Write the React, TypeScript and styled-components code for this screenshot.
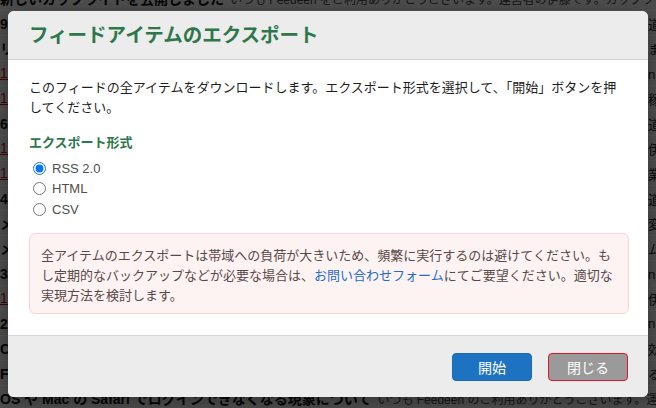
import React from "react";
import styled, { createGlobalStyle, css } from "styled-components";

const Global = createGlobalStyle`
  html, body { margin: 0; padding: 0; }
  body {
    width: 656px;
    height: 408px;
    overflow: hidden;
    background: #ffffff;
    font-family: "Liberation Sans", "Noto Sans CJK JP", sans-serif;
    -webkit-font-smoothing: antialiased;
  }
`;

const Page = styled.div`
  position: relative;
  width: 656px;
  height: 408px;
  overflow: hidden;
  background: #ececec;
`;

const FeedList = styled.ul`
  list-style: none;
  margin: -14px 0 0;
  padding: 0;
`;

const FeedRow = styled.li`
  display: flex;
  align-items: center;
  height: 24px;
  border-bottom: 1px solid #ffffff;
  white-space: nowrap;
  overflow: hidden;
  color: #111;
`;

const RowLead = styled.span<{ $link?: boolean }>`
  flex: none;
  width: 648px;
  overflow: hidden;
  font-size: 14px;
  font-weight: 700;
  ${(p) =>
    p.$link &&
    css`
      color: #c0121b;
      font-weight: 400;
      text-decoration: underline;
    `}
`;

const RowTail = styled.span`
  flex: none;
  font-size: 13px;
  color: #222;
`;

const HeadlineTitle = styled.span`
  font-size: 14px;
  font-weight: 700;
  margin-right: 6px;
`;

const HeadlineExcerpt = styled.span`
  font-size: 12px;
  color: #444;
`;

const Backdrop = styled.div`
  position: absolute;
  inset: 0;
  background: rgba(0, 0, 0, 0.68);
  display: flex;
  justify-content: center;
  align-items: flex-start;
  padding-top: 11px;
`;

const Dialog = styled.div`
  width: 640px;
  background: #ffffff;
  border-radius: 6px;
  overflow: hidden;
  box-shadow: 0 4px 16px rgba(0, 0, 0, 0.3);
`;

const Header = styled.div`
  height: 48px;
  display: flex;
  align-items: center;
  padding: 0 21px;
  background: #ececec;
  border-bottom: 1px solid #d4d4d4;
`;

const Title = styled.h2`
  margin: 0;
  font-size: 19.5px;
  font-weight: 700;
  color: #2e774a;
  line-height: 24px;
`;

const Body = styled.div`
  padding: 18px 19px 21px 21px;
  display: flex;
  flex-direction: column;
`;

const Lead = styled.p`
  margin: 0;
  font-size: 13px;
  line-height: 20px;
  color: #1e1e1e;
`;

const SectionLabel = styled.h3`
  margin: 15px 0 0;
  font-size: 13px;
  line-height: 20px;
  font-weight: 700;
  color: #2e774a;
`;

const RadioGroup = styled.div`
  margin-top: 5px;
  display: flex;
  flex-direction: column;
`;

const RadioRow = styled.label`
  display: flex;
  align-items: center;
  gap: 6px;
  height: 20.5px;
  padding-left: 4px;
  font-size: 13px;
  color: #4f4f4f;
`;

const RadioInput = styled.input`
  margin: 0;
  width: 13px;
  height: 13px;
  accent-color: #0b74f0;
`;

const Notice = styled.div`
  margin-top: 13.5px;
  padding: 12px 11px 7px 11px;
  border: 1px solid #f4d6d6;
  border-radius: 6px;
  background: #fdf3f3;
  font-size: 13px;
  line-height: 20px;
  color: #5a4848;
  white-space: nowrap;
`;

const NoticeLink = styled.a`
  color: #1f6cce;
  text-decoration: none;
`;

const Footer = styled.div`
  display: flex;
  justify-content: flex-end;
  gap: 16px;
  padding: 17px 20px 16px;
  background: #ececec;
  border-top: 1px solid #d4d4d4;
`;

const Button = styled.button<{ $variant: "primary" | "secondary" }>`
  width: 80px;
  height: 28px;
  border-radius: 4px;
  font-family: inherit;
  font-size: 14px;
  color: #ffffff;
  cursor: pointer;
  ${(p) =>
    p.$variant === "primary"
      ? css`
          background: #1e72c2;
          border: 1px solid #1b6ab6;
        `
      : css`
          background: #9a9a9a;
          border: 1px solid #e5132c;
        `}
`;

type Row = { lead: string; tail: string; link?: boolean };

const rows: Row[] = [
  { lead: "9/18 メンテナンスのお知らせ", tail: "道です" },
  { lead: "リリースノート", tail: "ます" },
  { lead: "1 users", tail: "n です", link: true },
  { lead: "1 users", tail: "稼働", link: true },
  { lead: "6/02 サーバー移転", tail: "道" },
  { lead: "1 users", tail: "伊藤", link: true },
  { lead: "1 users", tail: "業務", link: true },
  { lead: "4/21 仕様変更", tail: "道" },
  { lead: "メール配信について", tail: "変更" },
  { lead: "メンテナンス", tail: "ム" },
  { lead: "3/15 障害報告", tail: "n道" },
  { lead: "1 users", tail: "伊藤", link: true },
  { lead: "2/28 アップデート", tail: "n" },
  { lead: "Chrome 拡張", tail: "効果" },
  { lead: "Feedeen について", tail: "る" },
];

export default function App() {
  return (
    <>
      <Global />
      <Page>
        <FeedList>
          <FeedRow>
            <HeadlineTitle>新しいカップライトを公開しました</HeadlineTitle>
            <HeadlineExcerpt>
              いつも Feedeen をご利用ありがとうございます。運営者の伊藤です。カップライトのスクリプトを公開しました
            </HeadlineExcerpt>
          </FeedRow>
          {rows.map((r, i) => (
            <FeedRow key={i}>
              <RowLead $link={r.link}>{r.lead}</RowLead>
              <RowTail>{r.tail}</RowTail>
            </FeedRow>
          ))}
          <FeedRow>
            <HeadlineTitle>OS や Mac の Safari でログインできなくなる現象について</HeadlineTitle>
            <HeadlineExcerpt>
              いつも Feedeen のご利用ありがとうございます。運営者の伊藤です
            </HeadlineExcerpt>
          </FeedRow>
        </FeedList>
        <Backdrop>
          <Dialog role="dialog" aria-labelledby="export-title">
            <Header>
              <Title id="export-title">フィードアイテムのエクスポート</Title>
            </Header>
            <Body>
              <Lead>
                このフィードの全アイテムをダウンロードします。エクスポート形式を選択して、「開始」ボタンを押してください。
              </Lead>
              <SectionLabel>エクスポート形式</SectionLabel>
              <RadioGroup>
                <RadioRow>
                  <RadioInput type="radio" name="format" defaultChecked />
                  RSS 2.0
                </RadioRow>
                <RadioRow>
                  <RadioInput type="radio" name="format" />
                  HTML
                </RadioRow>
                <RadioRow>
                  <RadioInput type="radio" name="format" />
                  CSV
                </RadioRow>
              </RadioGroup>
              <Notice>
                全アイテムのエクスポートは帯域への負荷が大きいため、頻繁に実行するのは避けてください。も
                <br />
                し定期的なバックアップなどが必要な場合は、
                <NoticeLink href="#">お問い合わせフォーム</NoticeLink>
                にてご要望ください。適切な
                <br />
                実現方法を検討します。
              </Notice>
            </Body>
            <Footer>
              <Button $variant="primary">開始</Button>
              <Button $variant="secondary">閉じる</Button>
            </Footer>
          </Dialog>
        </Backdrop>
      </Page>
    </>
  );
}
